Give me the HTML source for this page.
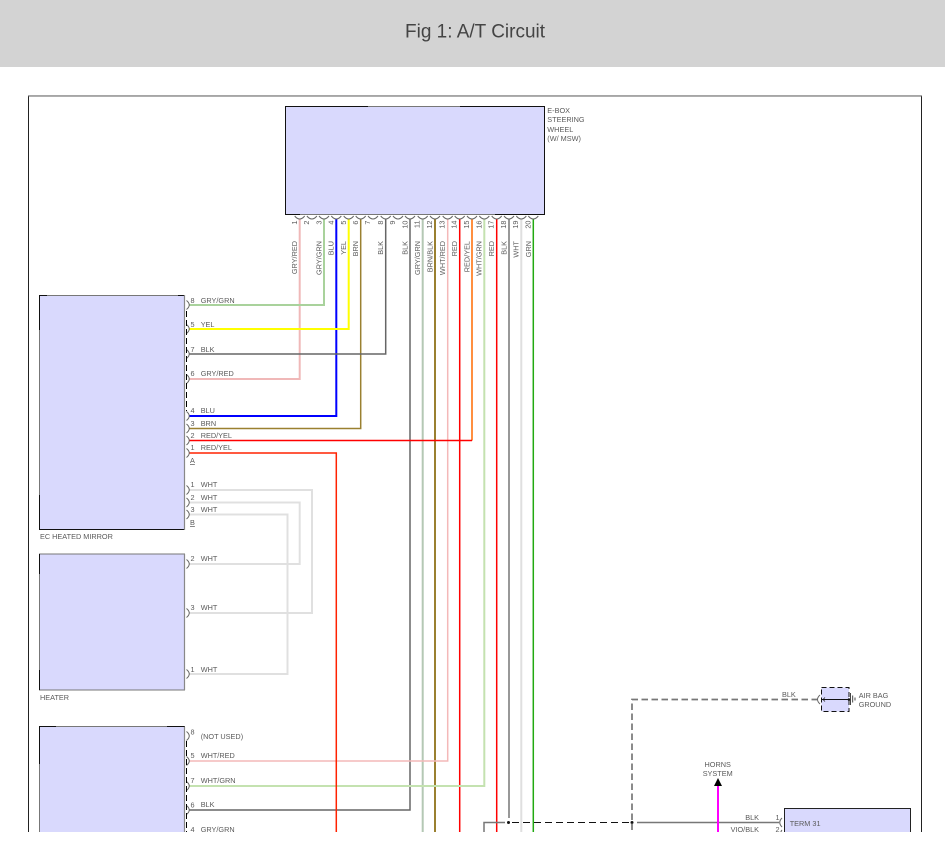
<!DOCTYPE html>
<html>
<head>
<meta charset="utf-8">
<title>Fig 1: A/T Circuit</title>
<style>
html,body{margin:0;padding:0;background:#fff;width:945px;height:855px;overflow:hidden}
svg{display:block;position:absolute;left:0;top:0}
text{font-family:"Liberation Sans",sans-serif;font-size:7.3px;fill:#5a5a5a}
.w{fill:none;stroke-width:2}
.t{fill:none;stroke-width:1.5}
.c{fill:none;stroke:#666;stroke-width:1}
.v{text-anchor:end}
</style>
</head>
<body>
<svg width="945" height="855" viewBox="0 0 945 855">
<defs><clipPath id="k"><rect x="0" y="0" width="945" height="832"/></clipPath></defs>
<rect x="0" y="0" width="945" height="67" fill="#d3d3d3"/>
<text x="405" y="37.5" textLength="140" lengthAdjust="spacingAndGlyphs" style="font-size:19.5px;fill:#444">Fig 1: A/T Circuit</text>
<g clip-path="url(#k)">
<!-- frame -->
<path d="M28.5 860V96H921.5V860" fill="none" stroke="#222" stroke-width="1"/>
<path d="M28 95.7H922" stroke="#999" stroke-width="1.2"/>
<!-- boxes -->
<rect x="285.5" y="106.5" width="259" height="108" fill="#d9d9fd" stroke="#111" stroke-width="1"/>
<path d="M368 106.5H460M495 214.5H300" stroke="#777" stroke-width="1" fill="none"/>
<rect x="39.5" y="295.5" width="145" height="234" fill="#d9d9fd" stroke="#777" stroke-width="1"/>
<path d="M39.5 330V295.5H47M178 295.5H184.5M39.5 495V529.5H184.5" fill="none" stroke="#111" stroke-width="1"/>
<path d="M184.5 295V530" stroke="#888" stroke-width="1.2"/>
<rect x="39.5" y="554" width="145" height="136" fill="#d9d9fd" stroke="#777" stroke-width="1"/>
<path d="M39.5 574V554M39.5 670V690" stroke="#111" stroke-width="1"/>
<path d="M184.5 554V690" stroke="#888" stroke-width="1.2"/>
<rect x="39.5" y="726.5" width="145" height="130" fill="#d9d9fd" stroke="#777" stroke-width="1"/>
<path d="M39.5 764V726.5H56M167 726.5H184.5" fill="none" stroke="#111" stroke-width="1"/>
<path d="M184.5 727V832" stroke="#888" stroke-width="1.2"/>
<rect x="784.5" y="808.5" width="126" height="50" fill="#d9d9fd" stroke="#222" stroke-width="1"/>
<rect x="821.5" y="687.5" width="27.5" height="24" fill="#d9d9fd" stroke="#111" stroke-width="1" stroke-dasharray="5 3"/>

<!-- wires from top -->
<path class="w" stroke="#f0b8b8" d="M299.7 219V379H189"/>
<path class="w" stroke="#a9d29c" d="M324 219V305H189"/>
<path class="w" stroke="#0000ff" d="M336.3 219V416H189"/>
<path class="w" stroke="#ffff00" d="M348.7 219V329H189"/>
<path class="t" stroke="#9a8030" d="M360.7 219V428.5H189"/>
<path class="t" stroke="#666" d="M385.7 219V354H189"/>
<path class="t" stroke="#666" d="M410 219V810H189"/>
<path class="w" stroke="#b4c8b4" d="M422.7 219V840"/>
<path class="w" stroke="#9a8030" d="M435 219V840"/>
<path class="t" stroke="#f4b8b8" d="M447.7 219V761H189"/>
<path class="t" stroke="#ff0000" d="M459.7 219V840"/>
<path class="t" stroke="#ff6a00" d="M472 219V440.5"/>
<path class="t" stroke="#ff0000" d="M472 440.5H189"/>
<path class="w" stroke="#c4e2b0" d="M484.3 219V786H189"/>
<path class="t" stroke="#ff0000" d="M496.7 219V840"/>
<path class="t" stroke="#777" d="M509 219V818"/>
<path class="w" stroke="#dfdfdf" d="M521.3 219V840"/>
<path class="t" stroke="#22aa11" d="M533.3 219V840"/>
<!-- red/yel 1 -->
<path class="t" stroke="#ff2200" d="M189 453H336.3V840"/>
<!-- white group -->
<path class="w" stroke="#e0e0e0" d="M189 490H312V613H189"/>
<path class="w" stroke="#e0e0e0" d="M189 502.5H299.7V564H189"/>
<path class="w" stroke="#e0e0e0" d="M189 514.5H287.5V674H189"/>
<!-- bottom bus -->
<path d="M484 840V822.5H505" fill="none" stroke="#777" stroke-width="1.5"/>
<path d="M512 822.5H630" stroke="#111" stroke-width="1" stroke-dasharray="7 4" fill="none"/>
<circle cx="508.5" cy="822.5" r="1.5" fill="#111"/>
<circle cx="632" cy="822.5" r="1.5" fill="#111"/>
<path d="M637 822.5H779" stroke="#777" stroke-width="1.5" fill="none"/>
<path d="M632 840V699.5H817" fill="none" stroke="#777" stroke-width="1.7" stroke-dasharray="6.5 3.5"/>
<path d="M718 786V840" stroke="#ff00ff" stroke-width="2" fill="none"/>
<path d="M714 786L718 778L722 786Z" fill="#000"/>
<!-- connectors left -->
<path class="c" d="M186.5 300.5Q192 305 186.5 309.5M186.5 324.5Q192 329 186.5 333.5M186.5 349.5Q192 354 186.5 358.5M186.5 374.5Q192 379 186.5 383.5M186.5 411.5Q192 416 186.5 420.5M186.5 424Q192 428.5 186.5 433M186.5 436Q192 440.5 186.5 445M186.5 448.5Q192 453 186.5 457.5M186.5 485.5Q192 490 186.5 494.5M186.5 498Q192 502.5 186.5 507M186.5 510Q192 514.5 186.5 519M186.5 559.5Q192 564 186.5 568.5M186.5 608.5Q192 613 186.5 617.5M186.5 669.5Q192 674 186.5 678.5M186.5 731.5Q192 736 186.5 740.5M186.5 756.5Q192 761 186.5 765.5M186.5 781.5Q192 786 186.5 790.5M186.5 805.5Q192 810 186.5 814.5"/>
<path d="M186.5 311V411M186.5 741V832" stroke="#000" stroke-width="1" stroke-dasharray="6 3" fill="none"/>
<!-- connectors top -->
<path class="c" d="M294.7 216Q299.7 222 304.7 216M306.9 216Q311.9 222 316.9 216M319 216Q324 222 329 216M331.3 216Q336.3 222 341.3 216M343.7 216Q348.7 222 353.7 216M355.7 216Q360.7 222 365.7 216M368 216Q373 222 378 216M380.7 216Q385.7 222 390.7 216M393 216Q398 222 403 216M405 216Q410 222 415 216M417.7 216Q422.7 222 427.7 216M430 216Q435 222 440 216M442.7 216Q447.7 222 452.7 216M454.7 216Q459.7 222 464.7 216M467 216Q472 222 477 216M479.3 216Q484.3 222 489.3 216M491.7 216Q496.7 222 501.7 216M504 216Q509 222 514 216M516.3 216Q521.3 222 526.3 216M528.3 216Q533.3 222 538.3 216"/>
<!-- connectors right -->
<path class="c" d="M820 695Q815 699.5 820 704M782 818Q777.5 822.5 782 827M782 830Q780 832 782 834"/>
<path d="M822 699.5H849" stroke="#111" stroke-width="0.9"/>
<path d="M823 699.5l2-2M823 699.5l2 2" stroke="#111" stroke-width="0.7" fill="none"/>
<circle cx="849" cy="699.5" r="1.3" fill="#111"/>
<path d="M850.5 693V705M852.7 695.5V702.5M855 697.5V700.5" stroke="#333" stroke-width="0.9" fill="none"/>

<!-- top labels -->
<text x="547.3" y="113">E-BOX</text>
<text x="547.3" y="122">STEERING</text>
<text x="547.3" y="132">WHEEL</text>
<text x="547.3" y="141">(W/ MSW)</text>
<g>
<text class="v" transform="translate(297 220.5) rotate(-90)">1</text>
<text class="v" transform="translate(309.2 220.5) rotate(-90)">2</text>
<text class="v" transform="translate(321.4 220.5) rotate(-90)">3</text>
<text class="v" transform="translate(333.6 220.5) rotate(-90)">4</text>
<text class="v" transform="translate(345.8 220.5) rotate(-90)">5</text>
<text class="v" transform="translate(358 220.5) rotate(-90)">6</text>
<text class="v" transform="translate(370.2 220.5) rotate(-90)">7</text>
<text class="v" transform="translate(382.9 220.5) rotate(-90)">8</text>
<text class="v" transform="translate(395.1 220.5) rotate(-90)">9</text>
<text class="v" transform="translate(407.4 220.5) rotate(-90)">10</text>
<text class="v" transform="translate(419.6 220.5) rotate(-90)">11</text>
<text class="v" transform="translate(431.9 220.5) rotate(-90)">12</text>
<text class="v" transform="translate(444.4 220.5) rotate(-90)">13</text>
<text class="v" transform="translate(456.7 220.5) rotate(-90)">14</text>
<text class="v" transform="translate(469 220.5) rotate(-90)">15</text>
<text class="v" transform="translate(481.3 220.5) rotate(-90)">16</text>
<text class="v" transform="translate(493.6 220.5) rotate(-90)">17</text>
<text class="v" transform="translate(505.9 220.5) rotate(-90)">18</text>
<text class="v" transform="translate(518.2 220.5) rotate(-90)">19</text>
<text class="v" transform="translate(530.5 220.5) rotate(-90)">20</text>
<text class="v" transform="translate(297 241) rotate(-90)">GRY/RED</text>
<text class="v" transform="translate(321.4 241) rotate(-90)">GRY/GRN</text>
<text class="v" transform="translate(333.6 241) rotate(-90)">BLU</text>
<text class="v" transform="translate(346.2 241) rotate(-90)">YEL</text>
<text class="v" transform="translate(358 241) rotate(-90)">BRN</text>
<text class="v" transform="translate(383 241) rotate(-90)">BLK</text>
<text class="v" transform="translate(407.6 241) rotate(-90)">BLK</text>
<text class="v" transform="translate(420 241) rotate(-90)">GRY/GRN</text>
<text class="v" transform="translate(432.3 241) rotate(-90)">BRN/BLK</text>
<text class="v" transform="translate(445 241) rotate(-90)">WHT/RED</text>
<text class="v" transform="translate(457 241) rotate(-90)">RED</text>
<text class="v" transform="translate(469.3 241) rotate(-90)">RED/YEL</text>
<text class="v" transform="translate(481.6 241) rotate(-90)">WHT/GRN</text>
<text class="v" transform="translate(494 241) rotate(-90)">RED</text>
<text class="v" transform="translate(506.3 241) rotate(-90)">BLK</text>
<text class="v" transform="translate(518.6 241) rotate(-90)">WHT</text>
<text class="v" transform="translate(531 241) rotate(-90)">GRN</text>
</g>
<!-- left labels -->
<text x="190.5" y="303">8</text><text x="200.7" y="303">GRY/GRN</text>
<text x="190.5" y="327">5</text><text x="200.7" y="327">YEL</text>
<text x="190.5" y="352">7</text><text x="200.7" y="352">BLK</text>
<text x="190.5" y="376">6</text><text x="200.7" y="376">GRY/RED</text>
<text x="190.5" y="413">4</text><text x="200.7" y="413">BLU</text>
<text x="190.5" y="426">3</text><text x="200.7" y="426">BRN</text>
<text x="190.5" y="438">2</text><text x="200.7" y="438">RED/YEL</text>
<text x="190.5" y="450">1</text><text x="200.7" y="450">RED/YEL</text>
<text x="190" y="463" text-decoration="underline">A</text>
<text x="190.5" y="487">1</text><text x="200.7" y="487">WHT</text>
<text x="190.5" y="500">2</text><text x="200.7" y="500">WHT</text>
<text x="190.5" y="512">3</text><text x="200.7" y="512">WHT</text>
<text x="190" y="525" text-decoration="underline">B</text>
<text x="40" y="539">EC HEATED MIRROR</text>
<text x="190.5" y="561">2</text><text x="200.7" y="561">WHT</text>
<text x="190.5" y="610">3</text><text x="200.7" y="610">WHT</text>
<text x="190.5" y="672">1</text><text x="200.7" y="672">WHT</text>
<text x="40" y="700">HEATER</text>
<text x="190.5" y="734.5">8</text><text x="200.7" y="739">(NOT USED)</text>
<text x="190.5" y="758">5</text><text x="200.7" y="758">WHT/RED</text>
<text x="190.5" y="783">7</text><text x="200.7" y="783">WHT/GRN</text>
<text x="190.5" y="807.5">6</text><text x="200.7" y="807">BLK</text>
<text x="190.5" y="832">4</text><text x="200.7" y="832">GRY/GRN</text>
<!-- right labels -->
<text x="782" y="697">BLK</text>
<text x="858.7" y="698">AIR BAG</text>
<text x="858.7" y="707">GROUND</text>
<text x="717.7" y="767" text-anchor="middle">HORNS</text>
<text x="717.7" y="776" text-anchor="middle">SYSTEM</text>
<text x="759" y="820" text-anchor="end">BLK</text>
<text x="759" y="832" text-anchor="end">VIO/BLK</text>
<text x="775.5" y="820">1</text>
<text x="775.5" y="832">2</text>
<text x="789.7" y="826">TERM 31</text>
</g>
</svg>
</body>
</html>
